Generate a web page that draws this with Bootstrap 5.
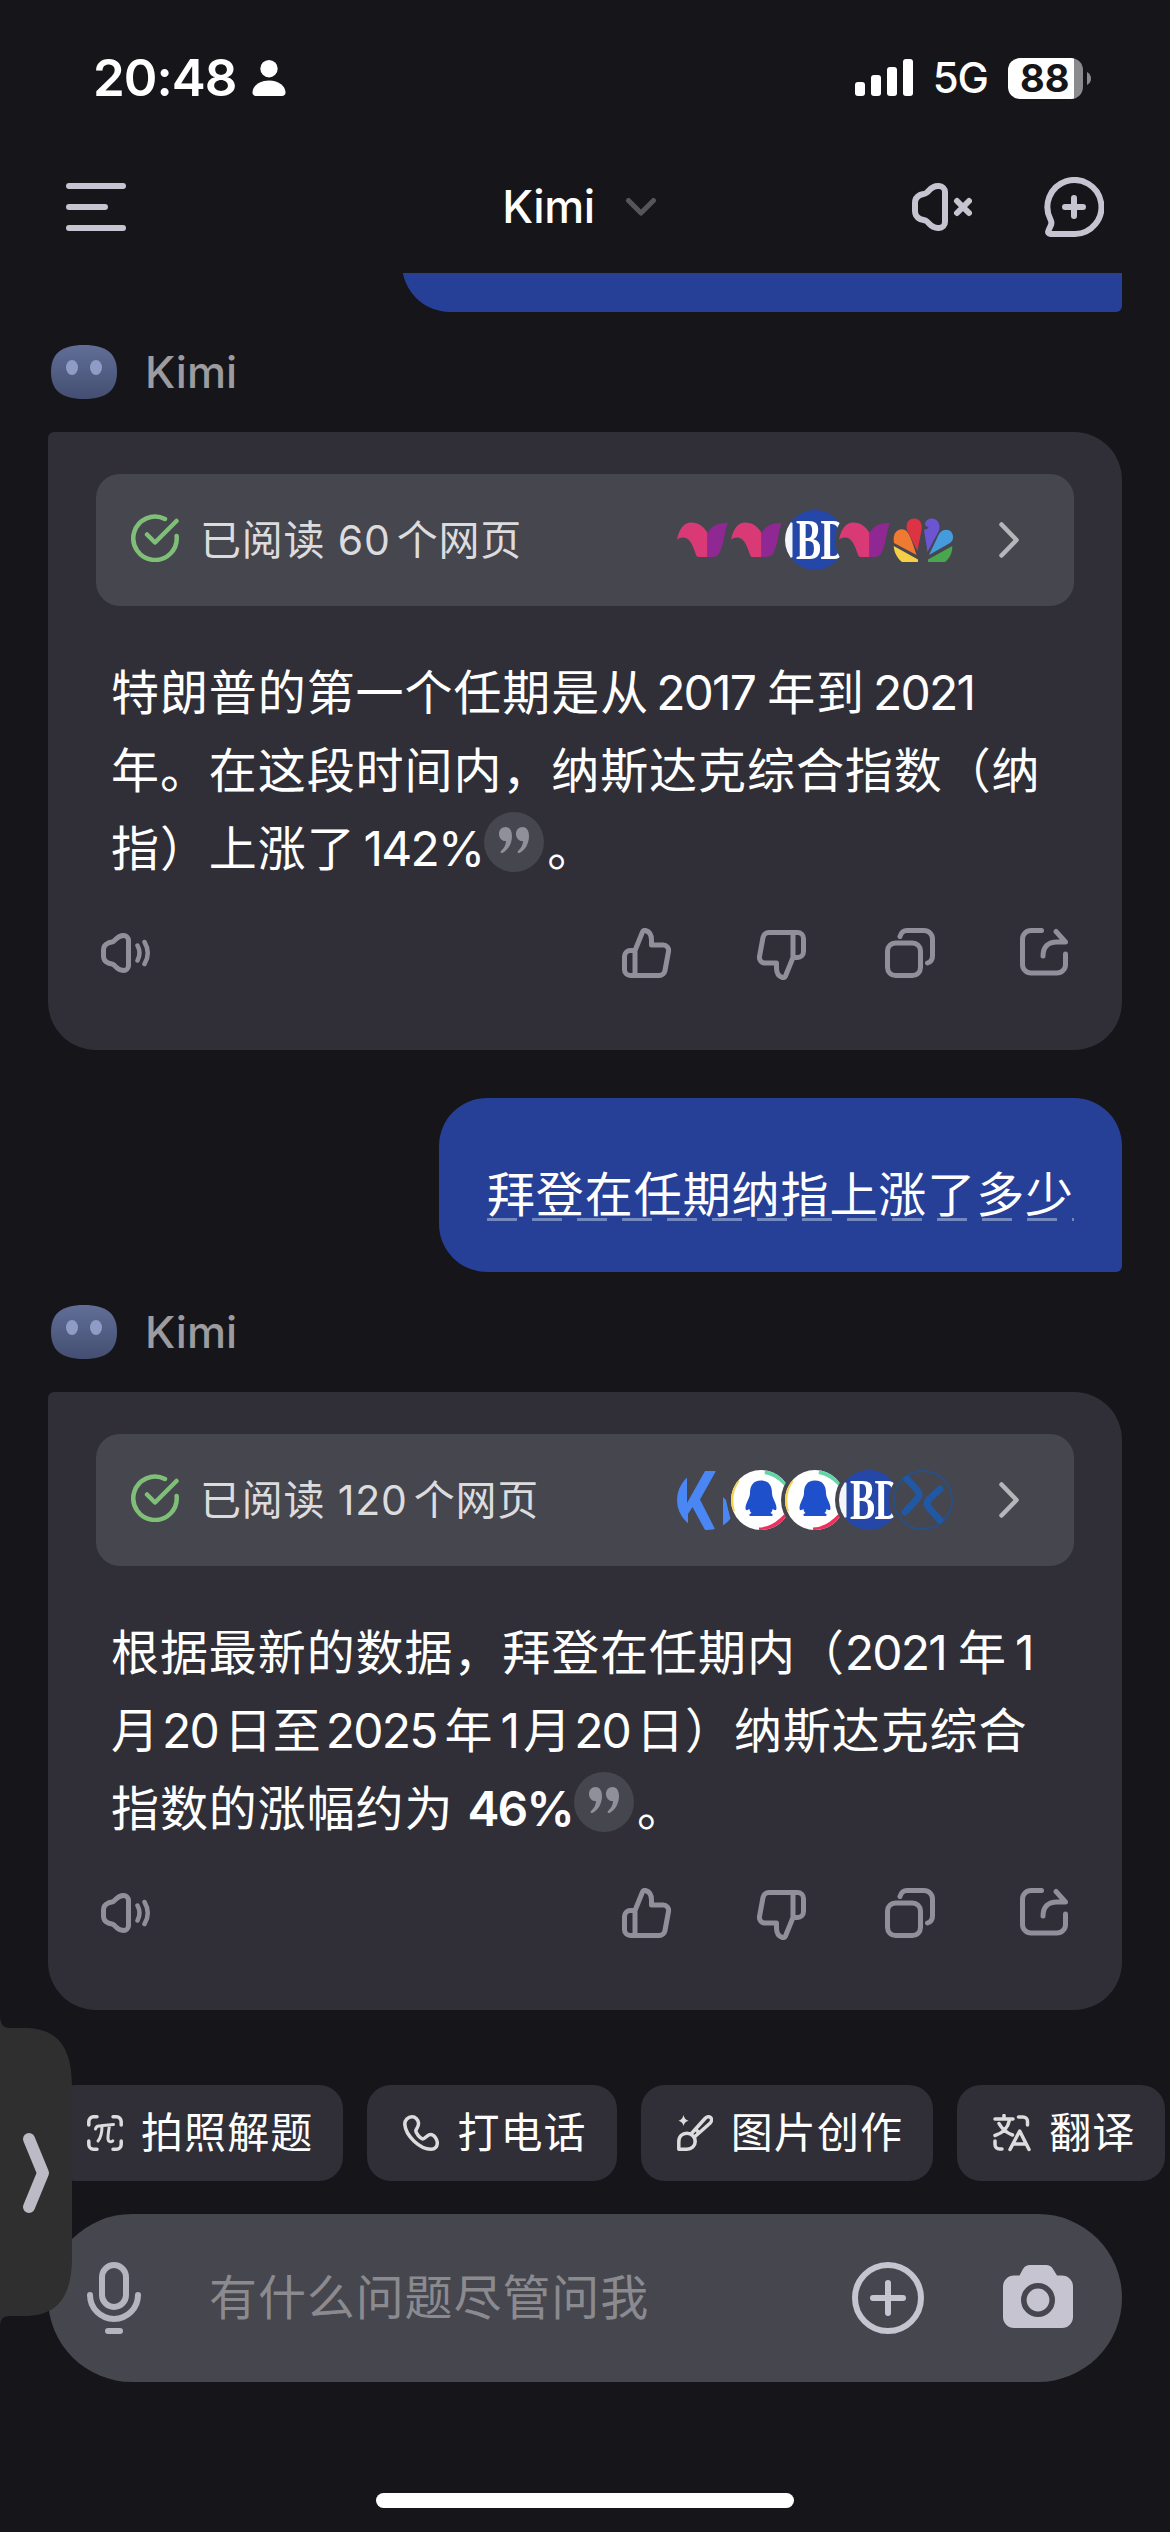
<!DOCTYPE html>
<html lang="zh-CN">
<head>
<meta charset="utf-8">
<meta name="viewport" content="width=device-width, initial-scale=1">
<title>Kimi</title>
<link href="https://cdn.jsdelivr.net/npm/bootstrap@5.3.0/dist/css/bootstrap.min.css" rel="stylesheet">
<style>
  body { background: #16151a; color: #fff; font-family: Inter, "Noto Sans CJK SC", sans-serif; }
  svg { display: block; flex: none; }
  .phone { width: 1170px; height: 2532px; background: #16151a; }
  .status-bar { height: 156px; padding: 0 79px 0 93px; }
  .clock { font-size: 51px; font-weight: 600; letter-spacing: -1px; line-height: 60px; }
  .net-label { font-size: 42px; font-weight: 500; line-height: 50px; letter-spacing: -1px; }
  .battery { width: 75px; height: 41px; border-radius: 12px; background: linear-gradient(90deg, #fff 66px, #8b8b8e 66px); color: #16151a; font-size: 38px; font-weight: 700; line-height: 41px; letter-spacing: 0; padding-left: 12px; }
  .title-bar { height: 102px; margin-bottom: 15px; padding: 0 66px; }
  .title-mid { padding-right: 5px; }
  .title-text { font-size: 45px; font-weight: 500; line-height: 60px; letter-spacing: -.4px; }
  .bubble-plus { margin-left: 72px; }
  .user-bubble { background: #274097; border-radius: 48px 48px 6px 48px; }
  .clip-edge { height: 39px; overflow: hidden; }
  .clip-edge .user-bubble { width: 720px; height: 174px; flex: none; }
  .sender { height: 120px; padding-left: 3px; gap: 28px; color: #9c9b9f; font-size: 44px; font-weight: 500; }
  .reply { height: 618px; background: #302f38; border-radius: 6px 48px 48px 48px; padding: 42px 48px 0; }
  .sources { height: 132px; border-radius: 24px; background: #46464e; padding: 0 55px 0 35px; color: #dcdcde; font-size: 41px; }
  .sources > svg:first-child { margin-bottom: 4px; }
  .sources-text { letter-spacing: .8px; margin-left: 21px; line-height: 60px; white-space: pre; }
  .snum { margin-right: 6px; }
  .favs { margin-right: 46px; }
  .favs svg + svg { margin-left: -6px; }
  .answer { font-size: 48px; line-height: 78px; letter-spacing: .92px; margin: 48px 0 0 15px; white-space: nowrap; }
  .answer .line { height: 78px; display: flex; }
  .num { letter-spacing: -1.8px; }
  .n-a { margin: 0 12px 0 7px; }
  .n-b, .n-c { margin-left: 8px; }
  .n-d { margin-right: 12px; }
  .n-e { margin-left: 8px; }
  .n-f { margin: 0 6px 0 2px; }
  .n-g { margin: 0 8px 0 4px; }
  .n-h { margin: 0 5px 0 7px; }
  .n-i { margin-left: 14px; font-weight: 600; }
  .quote { width: 60px; height: 60px; border-radius: 50%; background: #46464e; margin: 2px 3px 0 1px; padding: 15px 0 0 15px; }
  .acts { margin: 38px 6px 0 5px; color: #908f9a; }
  .act-down { margin-left: 84px; }
  .act-copy { margin-left: 79px; }
  .act-share { margin-left: 85px; }
  .question { height: 174px; padding: 58px 48px 0; font-size: 48px; letter-spacing: .92px; line-height: 78px; }
  .question span { display: block; height: 65px; line-height: 78px; background: repeating-linear-gradient(90deg, #7489c0 0 30px, transparent 30px 45px) 0 62px / 100% 3px no-repeat; }
  .chip-row { margin: 75px 0 0 51px; gap: 24px; color: #dcdcdd; }
  .chip { height: 96px; flex: none; border-radius: 24px; background: #302f38; padding: 0 30px 0 36px; gap: 18px; font-size: 42px; letter-spacing: 1.1px; }
  .chip span { color: #fff; line-height: 60px; }
  .composer { height: 168px; margin: 33px 48px 0; border-radius: 84px; background: #46464e; padding: 0 49px 0 39px; color: #c6c4d0; }
  .hint { color: #8b8a8f; font-size: 48px; letter-spacing: .9px; margin-left: 68px; }
  .cam { margin-left: 79px; }
  .home-bar { width: 418px; height: 15px; border-radius: 8px; margin-top: 111px; }
  .side-tab { left: 0; top: 2015px; }
</style>
</head>
<body>
<svg width="0" height="0" class="position-absolute" aria-hidden="true">
  <defs>
    <clipPath id="disc"><circle cx="30" cy="30" r="30"/></clipPath>
    <mask id="bite"><rect width="60" height="60" fill="#fff"/><circle cx="84" cy="30" r="34" fill="#000"/></mask>
    <linearGradient id="face" x1="0" y1="0" x2="0" y2="1"><stop offset="0" stop-color="#616e96"/><stop offset="1" stop-color="#444e72"/></linearGradient>
    <symbol id="avatar" viewBox="0 0 66 54">
      <path d="M33 0C56 0 66 9 66 27S56 54 33 54 0 45 0 27 10 0 33 0z" fill="url(#face)"/>
      <ellipse cx="21" cy="22.500" rx="6" ry="7.500" fill="#8f9dc6"/><ellipse cx="45" cy="22.500" rx="6" ry="7.500" fill="#8f9dc6"/>
    </symbol>
    <symbol id="done" viewBox="0 0 48 48"><g fill="none" stroke="#7fbf78" stroke-width="4.500" stroke-linecap="round" stroke-linejoin="round"><path d="M34 5A21.700 21.700 0 1 0 45.600 22"/><path d="M16 20.500l8 8L45.500 7"/></g></symbol>
    <symbol id="next" viewBox="0 0 20 36"><path d="M2.500 2.500L17.500 18 2.500 33.500" fill="none" stroke="#b6b6ba" stroke-width="4.500" stroke-linecap="round" stroke-linejoin="round"/></symbol>
    <symbol id="quote-mark" viewBox="0 0 30 26"><g fill="#908f9a"><path d="M6.500 0C11 0 13 4 13 9c0 8-4 14-9.500 17-1.500.5-2.500-1-1.500-2 3-3 5-6 5-10C3 14.500 0 11 0 7s2.500-7 6.500-7z"/><path transform="translate(17)" d="M6.500 0C11 0 13 4 13 9c0 8-4 14-9.500 17-1.500.5-2.500-1-1.500-2 3-3 5-6 5-10C3 14.500 0 11 0 7s2.500-7 6.500-7z"/></g></symbol>
    <symbol id="speaker" viewBox="0 0 50 40"><g fill="none" stroke="currentColor" stroke-width="5" stroke-linecap="round" stroke-linejoin="round"><path d="M27.500 7.500v25a5 5 0 0 1-5 5c-5 0-7-3-9.500-5.500-1.500-1.500-4-1-6-2.200C4 28.500 2.500 26.500 2.500 23v-6c0-3.500 1.500-5.500 4.500-6.800 2-1.200 4.500-.7 6-2.200 2.500-2.500 4.500-5.500 9.500-5.500a5 5 0 0 1 5 5z"/><path d="M36.500 12.500q4 7.500 0 15M43.500 9q6.500 11 0 22" stroke-width="4.500"/></g></symbol>
    <symbol id="like" viewBox="0 0 50 50"><path d="M13 22.500H8.500a6 6 0 0 0-6 6v13a6 6 0 0 0 6 6H37a6 6 0 0 0 6-5l3.500-19a5.500 5.500 0 0 0-5.500-6.500H29.500V12c0-5-2.500-8.500-6-9.500-1.500-.3-2.500.3-3 1.500L13 22.500v25" fill="none" stroke="currentColor" stroke-width="5" stroke-linejoin="round"/></symbol>
    <symbol id="copy" viewBox="0 0 50 50"><g fill="none" stroke="currentColor" stroke-width="5" stroke-linecap="round"><rect x="2.500" y="15" width="33" height="32.500" rx="8"/><path d="M15 8.500c1-3.500 3.500-6 7-6h17a8.500 8.500 0 0 1 8.500 8.500v17c0 3.500-2 6-5 7"/></g></symbol>
    <symbol id="share" viewBox="0 0 48 48"><g fill="none" stroke="currentColor" stroke-width="5" stroke-linecap="round" stroke-linejoin="round"><path d="M21.500 2.500H11A8.500 8.500 0 0 0 2.500 11v25.500A8.500 8.500 0 0 0 11 45h26a8.500 8.500 0 0 0 8.500-8.500V26"/><path d="M23 28c0-9 5-14 14-14h8.500L36 3.500"/></g></symbol>
    <symbol id="fav-wing" viewBox="0 0 60 60"><path fill="#d93a76" d="M0 30C2 18 8 12.500 14 12.500 22 12.500 27 17 30.500 23v24H22c-2.500 0-3-2-4-5-3-9-6-14.500-12-14.500-3 0-5 1-6 2.500z"/><path fill="#8f2892" d="M30.500 23C34 16 41 12.500 51 13c-2 4-3.500 12-4 16-1.500 6-3 11-5 14.500C40.500 46.500 38 47 30.500 47z"/></symbol>
    <symbol id="fav-bd" viewBox="0 0 60 60"><g mask="url(#bite)"><g clip-path="url(#disc)"><path fill="#2548a8" d="M0 0h60v60H0z"/><path fill="#f3f5fb" d="M0 0h3.500l2 12 2 1v34l-2 1-2 12H0z"/><text transform="translate(11 48.500) scale(.66 1)" font-family="Liberation Serif" font-weight="700" font-size="57" fill="#fff" letter-spacing="-1">BD</text></g></g></symbol>
    <symbol id="fav-nbc" viewBox="0 0 60 60">
      <path fill="#f5cf45" d="M.7 36L25 49.500V52H9C4 48 1 42 .7 36z"/><path fill="#ef7a31" d="M23.500 45L1 33C-1 22 6 17 12 20c4 2 7 11 11.500 25z"/><path fill="#dd3444" d="M24.500 41L14 20C12 12 17 8.500 21 8.500c6 0 8.500 5 7.500 11.500z"/>
      <path fill="#6b55d2" d="M34.500 42L31 20l5-2-4-3c0-4 3-6.500 7-6.500 5 0 9 5 7 12z"/><path fill="#459bdb" d="M36 45l10-21c3-5 10-6 13-1 2 4 1 8-2 10z"/><path fill="#4aa64e" d="M59.300 36L35 49.500V52h17c5-4 7.500-10 7.300-16z"/></symbol>
    <symbol id="fav-k" viewBox="0 0 60 60"><g mask="url(#bite)"><path clip-path="url(#disc)" fill="#4a86f4" d="M0 0h10v33L28 1h11L23 29.500 38.500 60H28L15.500 37 11 44v16H0zM46 27l3 3 5 21-8 5z"/></g></symbol>
    <symbol id="fav-qq" viewBox="0 0 60 60"><g mask="url(#bite)"><g clip-path="url(#disc)"><path fill="#fff" d="M0 0h60v60H0z"/><g fill="none" stroke-width="6"><path d="M7 10Q-3 23 2 42" stroke="#f8d24f" stroke-width="4"/><path d="M34 1q12 2 22 13" stroke="#63d6a8"/><path d="M28 60q14 0 27-14" stroke="#ee2f5f" stroke-width="5"/></g><path fill="#1f50cc" d="M30 10.500c8 0 11 5.500 11 12.500 0 5 4.500 10 4.500 15 0 3-2 2.500-4 1 0 2-1 3-2 4 3 1 3 3 0 3h-19c-3 0-3-2 0-3-1-1-2-2-2-4-2 1.500-4 2-4-1 0-5 4.500-10 4.500-15 0-7 3-12.500 11-12.500z"/></g></g></symbol>
    <symbol id="fav-x" viewBox="0 0 60 60"><g fill="none" stroke="#2158a3" stroke-linecap="round"><circle cx="30" cy="30" r="29" stroke="#255089" stroke-width="1.800"/><g stroke-width="7"><path d="M14 9l10 11q4 4.500 0 9L12 42"/><path d="M47 19L36 29q-3.500 5 0 9l11 12"/></g></g></symbol>
  </defs>
</svg>

<div class="phone d-flex flex-column position-relative overflow-hidden mx-auto">
  <div class="status-bar d-flex align-items-center justify-content-between flex-shrink-0">
    <div class="d-flex align-items-center">
      <span class="clock">20:48</span>
      <svg class="ms-3" width="34" height="36" viewBox="0 0 34 36" fill="#fff"><circle cx="17" cy="8.700" r="8.700"/><path d="M17 20.500c10 0 16.500 6 16.500 12 0 2-1.500 3.500-3.500 3.500H4c-2 0-3.500-1.500-3.500-3.500 0-6 6.500-12 16.500-12z"/></svg>
    </div>
    <div class="d-flex align-items-center">
      <svg width="58" height="38" viewBox="0 0 58 38" fill="#fff"><rect y="23" width="10" height="14" rx="3"/><rect x="16" y="16" width="10" height="21" rx="3"/><rect x="32" y="8" width="10" height="29" rx="3"/><rect x="48" width="10" height="37" rx="3"/></svg>
      <span class="net-label ms-3 me-3 px-1">5G</span>
      <div class="battery">88</div>
      <svg class="ms-1" width="4" height="13" viewBox="0 0 4 13"><path d="M0 0q4 2.500 4 6.500T0 13z" fill="#8b8b8e"/></svg>
    </div>
  </div>

  <div class="title-bar row g-0 align-items-center flex-shrink-0">
    <div class="col-4"><svg width="60" height="48" viewBox="0 0 60 48" stroke="#c6c4d0" stroke-width="6" stroke-linecap="round"><path d="M3 3h54M3 24h36M3 45h54"/></svg></div>
    <div class="title-mid col-4 d-flex align-items-center justify-content-center">
      <span class="title-text">Kimi</span>
      <svg class="ms-4" width="44" height="18" viewBox="-7 0 44 18"><path d="M2.500 2.500L15 15 27.500 2.500" fill="none" stroke="#56555b" stroke-width="5" stroke-linecap="round" stroke-linejoin="round"/></svg>
    </div>
    <div class="col-4 d-flex align-items-center justify-content-end">
      <svg width="60" height="48" viewBox="0 0 60 48" fill="none" stroke="#c6c4d0" stroke-width="6" stroke-linecap="round" stroke-linejoin="round"><path d="M33 9v30a6 6 0 0 1-6 6h-1c-6 0-8-3.500-11-6.500-2-2-5-1.500-7-2.500-3-1.500-5-4-5-8v-8c0-4 2-6.500 5-8 2-1 5-.5 7-2.500 3-3 5-6.500 11-6.500h1a6 6 0 0 1 6 6z"/><path d="M45 18l12 12M57 18L45 30"/></svg>
      <svg class="bubble-plus" width="60" height="60" viewBox="0 0 60 60" fill="none" stroke="#c6c4d0" stroke-width="6" stroke-linecap="round" stroke-linejoin="round"><path d="M31 57H6.500c-2 0-3-1.500-2-3.500L7 48c.8-2 .5-3.500-.5-5.500A27 27 0 1 1 31 57z"/><path d="M30 21v18M21 30h18"/></svg>
    </div>
  </div>

  <main class="px-5 flex-shrink-0">
    <div class="clip-edge d-flex justify-content-end align-items-end"><div class="user-bubble"></div></div>

    <div class="sender d-flex align-items-center"><svg width="66" height="54"><use href="#avatar"/></svg><span>Kimi</span></div>
    <section class="reply">
      <div class="sources d-flex align-items-center">
        <svg width="48" height="48"><use href="#done"/></svg>
        <span class="sources-text me-auto">已阅读 <span class="snum">60</span>个网页</span>
        <div class="favs d-flex">
          <svg width="60" height="60"><use href="#fav-wing"/></svg><svg width="60" height="60"><use href="#fav-wing"/></svg><svg width="60" height="60"><use href="#fav-bd"/></svg><svg width="60" height="60"><use href="#fav-wing"/></svg><svg width="60" height="60"><use href="#fav-nbc"/></svg>
        </div>
        <svg width="20" height="36"><use href="#next"/></svg>
      </div>
      <div class="answer">
        <div class="line">特朗普的第一个任期是从<span class="num n-a">2017</span>年到<span class="num n-b">2021</span></div>
        <div class="line">年。在这段时间内，纳斯达克综合指数（纳</div>
        <div class="line">指）上涨了<span class="num n-c">142%</span><span class="quote"><svg width="30" height="26"><use href="#quote-mark"/></svg></span>。</div>
      </div>
      <div class="acts d-flex align-items-center">
        <svg class="me-auto" width="50" height="40"><use href="#speaker"/></svg>
        <svg width="50" height="50"><use href="#like"/></svg>
        <svg class="act-down" width="50" height="54" viewBox="0 -4 50 54"><use href="#like" width="50" height="50" transform="rotate(180 25 25)"/></svg>
        <svg class="act-copy" width="50" height="50"><use href="#copy"/></svg>
        <svg class="act-share" width="48" height="50"><use href="#share" width="48" height="48"/></svg>
      </div>
    </section>

    <div class="d-flex justify-content-end mt-5"><div class="user-bubble question"><span>拜登在任期纳指上涨了多少</span></div></div>

    <div class="sender d-flex align-items-center"><svg width="66" height="54"><use href="#avatar"/></svg><span>Kimi</span></div>
    <section class="reply">
      <div class="sources d-flex align-items-center">
        <svg width="48" height="48"><use href="#done"/></svg>
        <span class="sources-text me-auto">已阅读 <span class="snum">120</span>个网页</span>
        <div class="favs d-flex">
          <svg width="60" height="60"><use href="#fav-k"/></svg><svg width="60" height="60"><use href="#fav-qq"/></svg><svg width="60" height="60"><use href="#fav-qq"/></svg><svg width="60" height="60"><use href="#fav-bd"/></svg><svg width="60" height="60"><use href="#fav-x"/></svg>
        </div>
        <svg width="20" height="36"><use href="#next"/></svg>
      </div>
      <div class="answer">
        <div class="line">根据最新的数据，拜登在任期内（<span class="num n-d">2021</span>年<span class="num n-e">1</span></div>
        <div class="line">月<span class="num n-f">20</span>日至<span class="num n-g">2025</span>年<span class="num n-h">1</span>月<span class="num n-f">20</span>日）纳斯达克综合</div>
        <div class="line">指数的涨幅约为<strong class="num n-i">46%</strong><span class="quote"><svg width="30" height="26"><use href="#quote-mark"/></svg></span>。</div>
      </div>
      <div class="acts d-flex align-items-center">
        <svg class="me-auto" width="50" height="40"><use href="#speaker"/></svg>
        <svg width="50" height="50"><use href="#like"/></svg>
        <svg class="act-down" width="50" height="54" viewBox="0 -4 50 54"><use href="#like" width="50" height="50" transform="rotate(180 25 25)"/></svg>
        <svg class="act-copy" width="50" height="50"><use href="#copy"/></svg>
        <svg class="act-share" width="48" height="50"><use href="#share" width="48" height="48"/></svg>
      </div>
    </section>
  </main>

  <div class="chip-row d-flex flex-shrink-0">
    <div class="chip d-flex align-items-center"><svg width="36" height="36" viewBox="0 0 36 36" fill="none" stroke="currentColor" stroke-width="3.500" stroke-linecap="round"><path d="M1.800 10V6.500a4.700 4.700 0 0 1 4.700-4.700H10M26 1.800h3.500a4.700 4.700 0 0 1 4.700 4.700V10M34.200 26v3.500a4.700 4.700 0 0 1-4.700 4.700H26M10 34.200H6.500a4.700 4.700 0 0 1-4.700-4.700V26"/><path d="M8.500 14c.5-2.500 2-3.200 5-3.200L26.500 9.500M15 11c0 7-1 11.500-4 15M22.500 10.500c-1 6-1.800 10.500-1.500 13.500.3 3 3 3.500 4.800 1.800" stroke-width="3"/></svg><span>拍照解题</span></div>
    <div class="chip d-flex align-items-center"><svg width="36" height="36" viewBox="0 0 36 36" fill="none" stroke="currentColor" stroke-width="3.500" stroke-linejoin="round"><path d="M9 1.800C5 1.800 1.600 5 1.800 9.500 2.800 21 17 34.200 28 34.200c4 0 6.300-2.700 6.300-6.200 0-3.500-3-8.500-6.800-8.500-3.500 0-5.500 5-8 4.500-2.500-1-7-6-6.700-8.500.5-2 3-3.500 2.700-7.500C15.200 4.800 12.500 1.800 9 1.800z"/></svg><span>打电话</span></div>
    <div class="chip d-flex align-items-center"><svg width="36" height="36" viewBox="0 0 36 36" fill="none" stroke="currentColor" stroke-width="3.500" stroke-linejoin="round"><path d="M6.500 0q1 4.700 5 5.700-4 1-5 5.300-1-4.300-5-5.300 4-1 5-5.700z" fill="currentColor" stroke="none"/><path d="M1.800 34.200V27c0-5.500 3.500-8.700 8.200-8.700s8.200 3.700 8.200 8.200-3.700 7.700-8.200 7.700zM14.500 18.500L28 3.500c2-2.200 4.500-2.200 5.700-.8s1 4-.7 5.500L18 21.500M18.500 14l4.500 5"/></svg><span>图片创作</span></div>
    <div class="chip d-flex align-items-center"><svg width="38" height="38" viewBox="0 0 38 38" fill="none" stroke="currentColor" stroke-width="3.500" stroke-linecap="round" stroke-linejoin="round"><path d="M2 5h18M11 1.500V5M16.500 6c-1.500 7.500-6.500 13-14.500 15.500M6 9.500c3 5.500 8 9.500 13.500 11.500M25.500 3H30a4.500 4.500 0 0 1 4.500 4.500V11M2 27v3.500A4.500 4.500 0 0 0 6.500 35H9M17 35.500L26.700 17 36 35.500M20.500 30H33"/></svg><span>翻译</span></div>
  </div>

  <div class="composer d-flex align-items-center flex-shrink-0">
    <svg width="54" height="72" viewBox="0 0 54 72" fill="none" stroke="#b5b4bf" stroke-width="6" stroke-linecap="round"><rect x="15" y="3" width="24" height="42" rx="12"/><path d="M3 33a24 24 0 0 0 48 0M21 69h12"/></svg>
    <span class="hint me-auto">有什么问题尽管问我</span>
    <svg width="72" height="72" viewBox="0 0 72 72" fill="none" stroke="currentColor" stroke-width="6" stroke-linecap="round"><circle cx="36" cy="36" r="33"/><path d="M36 21v30M21 36h30"/></svg>
    <svg class="cam" width="70" height="66" viewBox="0 0 70 66"><path fill="currentColor" d="M11 10.500h5.500L20 4c1.500-2.700 4-4 7-4h16c3 0 5.500 1.300 7 4l4 6.500h5a11 11 0 0 1 11 11V52a11 11 0 0 1-11 11H11A11 11 0 0 1 0 52V21.500a11 11 0 0 1 11-11z"/><circle cx="35" cy="35" r="14.200" fill="none" stroke="#46464e" stroke-width="5.600"/></svg>
  </div>
  <div class="home-bar bg-white mx-auto flex-shrink-0"></div>

  <svg class="side-tab position-absolute" width="72" height="316" viewBox="0 0 72 316"><path d="M0 0Q0 13 9 13H24C56 13 72 30 72 72V242C72 284 56 301 24 301H9Q0 301 0 311z" fill="#2f2f30"/><path d="M29 124L43 158 29 192" fill="none" stroke="#bcbac4" stroke-width="12" stroke-linecap="round" stroke-linejoin="round"/></svg>
</div>
<script src="https://cdn.jsdelivr.net/npm/bootstrap@5.3.0/dist/js/bootstrap.bundle.min.js"></script>
</body>
</html>
